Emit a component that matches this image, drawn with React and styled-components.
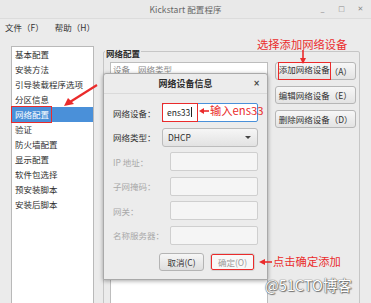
import React from "react";
import styled, { createGlobalStyle, css } from "styled-components";

const Global = createGlobalStyle`
  html, body { margin: 0; padding: 0; }
  body {
    width: 371px; height: 303px; overflow: hidden;
    font-family: "Noto Sans CJK SC", "Noto Sans", sans-serif;
    background: #ebebeb;
  }
`;

const RED = "#ea2b2b";

const Page = styled.div`
  position: relative;
  width: 371px;
  height: 303px;
  overflow: hidden;
  background: #ebebeb;
  color: #2e2e2e;
  font-size: 8.5px;
`;

const TitleBar = styled.div`
  height: 18px;
  display: grid;
  grid-template-columns: 1fr auto 1fr;
  align-items: center;
  background: #e9e9e9;
  border-bottom: 1px solid #dcdcdc;
  color: #666;
  font-size: 8.5px;
`;

const Title = styled.div`
  grid-column: 2;
  letter-spacing: 0.1px;
`;

const Controls = styled.div`
  justify-self: end;
  display: flex;
  gap: 12px;
  padding-right: 7px;
  color: #8a8a8a;
  font-family: "DejaVu Sans", sans-serif;
  font-size: 7px;
  align-items: center;
`;

const Ctl = styled.span`
  width: 7px;
  text-align: center;
`;

const MenuBar = styled.div`
  height: 16px;
  display: flex;
  align-items: center;
  gap: 11px;
  padding-left: 5px;
  color: #333;
`;

const Body = styled.div`
  display: flex;
  align-items: flex-start;
  gap: 9px;
  padding: 11px 0 0 11px;
`;

const Sidebar = styled.ul`
  list-style: none;
  margin: 0;
  padding: 0;
  width: 81px;
  height: 270px;
  background: #fff;
  border: 1px solid #b9b9b9;
`;

const Item = styled.li`
  height: 15px;
  line-height: 15px;
  padding-left: 3px;
  white-space: nowrap;
  ${(p) =>
    p.$selected &&
    css`
      background: #4a90d9;
      color: #fff;
    `}
`;

const Marked = styled.span`
  display: inline-block;
  outline: 1.5px solid ${RED};
  outline-offset: ${(p) => p.$offset || 0}px;
  height: 100%;
  box-sizing: border-box;
`;

const Group = styled.div`
  margin-top: 5px;
  width: 255px;
  height: 260px;
  border: 1px solid #c6c6c6;
  border-radius: 2px;
  display: flex;
  flex-direction: column;
`;

const GroupLabel = styled.span`
  align-self: flex-start;
  margin: -5px 0 0 1px;
  padding: 0 1px;
  line-height: 12px;
  background: #ebebeb;
  font-weight: bold;
  color: #2e2e2e;
`;

const GroupInner = styled.div`
  display: flex;
  gap: 7px;
  padding: 3px 3px 0 6px;
  flex: 1;
`;

const TablePane = styled.div`
  width: 157px;
  height: 260px;
  background: #fff;
  border: 1px solid #bdbdbd;
  border-bottom: none;
`;

const TableHeader = styled.div`
  height: 12px;
  display: flex;
  gap: 8px;
  align-items: center;
  padding-left: 2px;
  color: #8a8a8a;
  border-bottom: 1px solid #e2e2e2;
`;

const ButtonColumn = styled.div`
  width: 82px;
  display: flex;
  flex-direction: column;
  gap: 6px;
`;

const SideButton = styled.div`
  height: 18px;
  box-sizing: border-box;
  display: flex;
  align-items: center;
  padding-left: 3px;
  border: 1px solid #b6b6b6;
  border-radius: 3px;
  background: linear-gradient(#f7f7f7, #e3e3e3);
  color: #333;
  white-space: nowrap;
`;

const Dialog = styled.div`
  position: absolute;
  left: 103px;
  top: 73px;
  width: 165px;
  height: 207px;
  box-sizing: border-box;
  background: #ececec;
  border: 1px solid #a9a9a9;
  border-radius: 3px 3px 0 0;
  box-shadow: 0 1px 4px rgba(0, 0, 0, 0.35);
  display: flex;
  flex-direction: column;
`;

const DialogTitle = styled.div`
  height: 19px;
  display: grid;
  grid-template-columns: 1fr auto 1fr;
  align-items: center;
  border-bottom: 1px solid #dadada;
  font-weight: bold;
  font-size: 9px;
  color: #2e2e2e;
`;

const Close = styled.span`
  justify-self: end;
  padding-right: 7px;
  font-family: "DejaVu Sans", sans-serif;
  font-size: 8px;
  font-weight: bold;
  color: #444;
`;

const Form = styled.div`
  display: flex;
  flex-direction: column;
  gap: 5.5px;
  padding: 9px 9px 0 9px;
`;

const Row = styled.div`
  display: flex;
  align-items: center;
  height: 19px;
`;

const Label = styled.span`
  flex: 1;
  white-space: nowrap;
  color: ${(p) => (p.$disabled ? "#a9a9a9" : "#333")};
`;

const Field = styled.div`
  width: ${(p) => p.$w}px;
  height: 19px;
  box-sizing: border-box;
  border-radius: 2px;
  display: flex;
  align-items: center;
  ${(p) =>
    p.$kind === "focus" &&
    css`
      background: #fff;
      border: 1px solid #4a90d9;
    `}
  ${(p) =>
    p.$kind === "disabled" &&
    css`
      background: #f5f5f5;
      border: 1px solid #cfcfcf;
    `}
  ${(p) =>
    p.$kind === "select" &&
    css`
      background: linear-gradient(#f6f6f6, #e2e2e2);
      border: 1px solid #bcbcbc;
      border-radius: 3px;
      padding: 0 6px 0 5px;
      justify-content: space-between;
    `}
`;

const Typed = styled.span`
  width: 36px;
  height: 19px;
  margin: -1px 0 0 -1px;
  box-sizing: border-box;
  border: 1.5px solid ${RED};
  display: flex;
  align-items: center;
  padding-left: 4px;
  color: #222;
`;

const Caret = styled.span`
  width: 1px;
  height: 10px;
  background: #222;
  margin-left: 1px;
`;

const Arrow = styled.span`
  width: 0;
  height: 0;
  border-left: 3px solid transparent;
  border-right: 3px solid transparent;
  border-top: 3px solid #444;
`;

const ButtonRow = styled.div`
  display: flex;
  justify-content: flex-end;
  gap: 6px;
  padding-right: 12px;
  margin-top: 8.5px;
`;

const DlgButton = styled.div`
  width: 45px;
  height: 18px;
  box-sizing: border-box;
  display: flex;
  align-items: center;
  justify-content: center;
  border-radius: 3px;
  border: 1px solid ${(p) => (p.$primary ? "#d2d2d2" : "#b4b4b4")};
  background: ${(p) => (p.$primary ? "#f8f8f8" : "linear-gradient(#f6f6f6, #dedede)")};
  color: ${(p) => (p.$primary ? "#9a9a9a" : "#333")};
  ${(p) =>
    p.$marked &&
    css`
      outline: 1.5px solid ${RED};
      outline-offset: -2px;
    `}
`;

const Note = styled.span`
  position: absolute;
  left: ${(p) => p.$x}px;
  top: ${(p) => p.$y}px;
  color: ${RED};
  font-size: 11.3px;
  line-height: 14px;
  white-space: nowrap;
`;

const Watermark = styled.span`
  position: absolute;
  left: 265px;
  top: 276px;
  font-size: 14.5px;
  line-height: 18px;
  color: #fff;
  text-shadow: 0 0 1px #555, 0 0 1px #555, 1px 1px 1px #777;
  white-space: nowrap;
`;

const Overlay = styled.svg`
  position: absolute;
  left: 0;
  top: 0;
  pointer-events: none;
`;

const items = [
  "基本配置",
  "安装方法",
  "引导装载程序选项",
  "分区信息",
  "网络配置",
  "验证",
  "防火墙配置",
  "显示配置",
  "软件包选择",
  "预安装脚本",
  "安装后脚本",
];

export default function App() {
  return (
    <>
      <Global />
      <Page>
        <TitleBar>
          <Title>Kickstart 配置程序</Title>
          <Controls>
            <Ctl>_</Ctl>
            <Ctl>□</Ctl>
            <Ctl>✕</Ctl>
          </Controls>
        </TitleBar>
        <MenuBar>
          <span>文件（F）</span>
          <span>帮助（H）</span>
        </MenuBar>
        <Body>
          <Sidebar>
            {items.map((t) => (
              <Item key={t} $selected={t === "网络配置"}>
                {t === "网络配置" ? <Marked style={{ marginLeft: -3, paddingLeft: 3, paddingRight: 2 }}>{t}</Marked> : t}
              </Item>
            ))}
          </Sidebar>
          <Group>
            <GroupLabel>网络配置</GroupLabel>
            <GroupInner>
              <TablePane>
                <TableHeader>
                  <span>设备</span>
                  <span>网络类型</span>
                </TableHeader>
              </TablePane>
              <ButtonColumn>
                <SideButton>
                  <Marked $offset={0}>添加网络设备</Marked>（A）
                </SideButton>
                <SideButton>编辑网络设备（E）</SideButton>
                <SideButton>删除网络设备（D）</SideButton>
              </ButtonColumn>
            </GroupInner>
          </Group>
        </Body>

        <Dialog>
          <DialogTitle>
            <span style={{ gridColumn: 2 }}>网络设备信息</span>
            <Close>×</Close>
          </DialogTitle>
          <Form>
            <Row>
              <Label>网络设备：</Label>
              <Field $w={96} $kind="focus">
                <Typed>
                  ens33
                  <Caret />
                </Typed>
              </Field>
            </Row>
            <Row>
              <Label>网络类型：</Label>
              <Field $w={96} $kind="select">
                <span>DHCP</span>
                <Arrow />
              </Field>
            </Row>
            <Row>
              <Label $disabled>IP 地址：</Label>
              <Field $w={88} $kind="disabled" />
            </Row>
            <Row>
              <Label $disabled>子网掩码：</Label>
              <Field $w={88} $kind="disabled" />
            </Row>
            <Row>
              <Label $disabled>网关：</Label>
              <Field $w={88} $kind="disabled" />
            </Row>
            <Row>
              <Label $disabled>名称服务器：</Label>
              <Field $w={88} $kind="disabled" />
            </Row>
          </Form>
          <ButtonRow>
            <DlgButton>取消(C)</DlgButton>
            <DlgButton $primary $marked>
              确定(O)
            </DlgButton>
          </ButtonRow>
        </Dialog>

        <Note $x={257} $y={37}>选择添加网络设备</Note>
        <Note $x={210} $y={103}>输入ens33</Note>
        <Note $x={273} $y={254}>点击确定添加</Note>
        <Watermark>@51CTO博客</Watermark>

        <Overlay width="371" height="303" viewBox="0 0 371 303">
          <g stroke={RED} fill={RED} strokeWidth="1.6">
            <line x1="303" y1="50" x2="303" y2="59" />
            <polygon points="300,58 306,58 303,64" stroke="none" />
            <line x1="209" y1="111" x2="202" y2="111" />
            <polygon points="204,108 204,114 199,111" stroke="none" />
            <line x1="272" y1="262" x2="263" y2="262" />
            <polygon points="265,259 265,265 259,262" stroke="none" />
            <line x1="97" y1="85" x2="70" y2="102" strokeWidth="2.2" />
            <polygon points="64,106 68,98 74,104" stroke="none" />
          </g>
        </Overlay>
      </Page>
    </>
  );
}
